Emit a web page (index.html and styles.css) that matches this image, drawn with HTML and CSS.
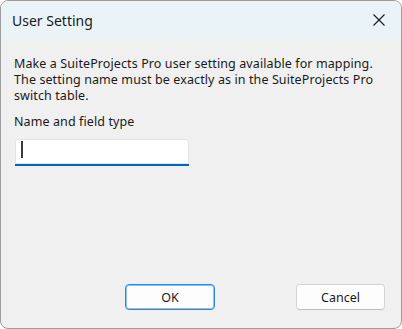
FILE: index.html
```html
<!DOCTYPE html>
<html lang="en">
<head>
  <meta charset="UTF-8" />
  <title>User Setting</title>
  <link rel="stylesheet" href="styles.css">
</head>
<body>
  <div class="dialog">
    <div class="titlebar">
      <span class="title">User Setting</span>
      <svg class="close" width="12" height="12" viewBox="0 0 12 12">
        <path d="M0.5 0.5 L11.5 11.5 M11.5 0.5 L0.5 11.5" stroke="#1a1a1a" stroke-width="1.1" fill="none" />
      </svg>
    </div>
    <div class="content">
      <p class="info">Make a SuiteProjects Pro user setting available for mapping.<br>The setting name must be exactly as in the SuiteProjects Pro<br>switch table.</p>
      <div class="label">Name and field type</div>
      <div class="field"><span class="caret"></span></div>
    </div>
    <div class="footer">
      <button class="btn default">OK</button>
      <button class="btn">Cancel</button>
    </div>
  </div>
</body>
</html>
```

FILE: styles.css
```css
body {
  margin: 0;
  background: #ffffff;
  font-family: "Noto Sans", "Open Sans", sans-serif;
  color: #1a1a1a;
}
.dialog {
  width: 402px;
  height: 329px;
  box-sizing: border-box;
  border: 1px solid #9c9c9c;
  border-radius: 8px;
  background: #f0f0f0;
  overflow: hidden;
  display: flex;
  flex-direction: column;
}
.titlebar {
  height: 39px;
  background: #eaf4f8;
  display: flex;
  align-items: center;
  justify-content: space-between;
  padding: 0 16px 0 11px;
}
.title {
  font-size: 14px;
  margin-top: -1px;
}
.close {
  margin-top: -1px;
}
.content {
  flex: 1;
  padding: 16px 13px 0;
}
.info {
  margin: 0;
  font-size: 12.5px;
  letter-spacing: 0.1px;
  line-height: 16px;
}
.label {
  font-size: 12.5px;
  letter-spacing: 0.1px;
  line-height: 16px;
  margin-top: 10px;
}
.field {
  width: 174px;
  height: 25px;
  margin: 9px 0 0 1px;
  background: #ffffff;
  border-bottom: 2px solid #0067c0;
  border-radius: 3px 3px 0 0;
  box-shadow: 0 0 0 1px #e5e5e5 inset;
  display: flex;
  align-items: flex-start;
}
.caret {
  width: 2px;
  height: 17px;
  margin: 2px 0 0 6px;
  background: #3a3a3a;
}
.footer {
  display: flex;
  justify-content: flex-end;
  gap: 81px;
  padding: 0 16px 18px 0;
}
.btn {
  width: 89px;
  height: 26px;
  font-family: "Noto Sans", "Open Sans", sans-serif;
  font-size: 12.5px;
  color: #1a1a1a;
  background: #fdfdfd;
  border: 1px solid #d4d4d4;
  border-bottom-color: #bdbdbd;
  border-radius: 4px;
  padding: 0;
}
.btn.default {
  width: 90px;
  border: 1px solid #2f86d6;
  box-shadow: 0 0 0 1px #8dc0ec inset;
}
```
